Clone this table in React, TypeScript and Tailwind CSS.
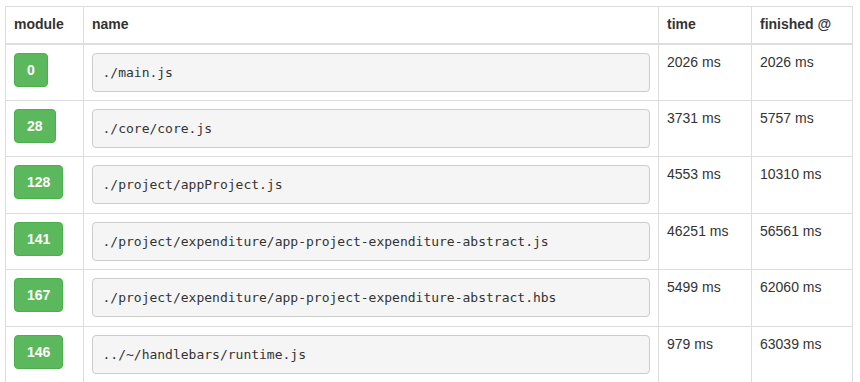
const rows = [
  { id: 0, name: "./main.js", time: "2026 ms", finished: "2026 ms" },
  { id: 28, name: "./core/core.js", time: "3731 ms", finished: "5757 ms" },
  { id: 128, name: "./project/appProject.js", time: "4553 ms", finished: "10310 ms" },
  { id: 141, name: "./project/expenditure/app-project-expenditure-abstract.js", time: "46251 ms", finished: "56561 ms" },
  { id: 167, name: "./project/expenditure/app-project-expenditure-abstract.hbs", time: "5499 ms", finished: "62060 ms" },
  { id: 146, name: "../~/handlebars/runtime.js", time: "979 ms", finished: "63039 ms" },
]

export default function App() {
  return (
    <div className="bg-white h-[382px] overflow-hidden pt-[6px] pl-[5px] text-[#333] text-sm leading-[1.42857] [font-family:'Liberation_Sans',Arial,sans-serif]">
      <table className="w-[848px] table-fixed border-collapse border border-[#ddd]">
        <colgroup>
          <col className="w-[78px]" />
          <col className="w-[575px]" />
          <col className="w-[93px]" />
          <col className="w-[101px]" />
        </colgroup>
        <thead>
          <tr>
            <th className="border border-[#ddd] border-b-2 p-2 text-left font-bold">module</th>
            <th className="border border-[#ddd] border-b-2 p-2 text-left font-bold">name</th>
            <th className="border border-[#ddd] border-b-2 p-2 text-left font-bold">time</th>
            <th className="border border-[#ddd] border-b-2 p-2 text-left font-bold">finished @</th>
          </tr>
        </thead>
        <tbody>
          {rows.map((r) => (
            <tr key={r.id} className="h-[56.5px]">
              <td className="border border-[#ddd] p-2 align-top">
                <span className="inline-block rounded px-3 py-1.5 text-sm leading-5 font-bold text-white bg-[#5cb85c] border border-[#4cae4c]">
                  {r.id}
                </span>
              </td>
              <td className="border border-[#ddd] px-2 pt-2 pb-0 align-top">
                <pre className="m-0 block h-[39px] rounded border border-[#ccc] bg-[#f5f5f5] px-[9.5px] py-[9px] text-[13px] leading-[19px] text-[#333] whitespace-pre [font-family:'DejaVu_Sans_Mono',Menlo,monospace]">
                  {r.name}
                </pre>
              </td>
              <td className="border border-[#ddd] p-2 align-top">{r.time}</td>
              <td className="border border-[#ddd] p-2 align-top">{r.finished}</td>
            </tr>
          ))}
        </tbody>
      </table>
    </div>
  )
}
